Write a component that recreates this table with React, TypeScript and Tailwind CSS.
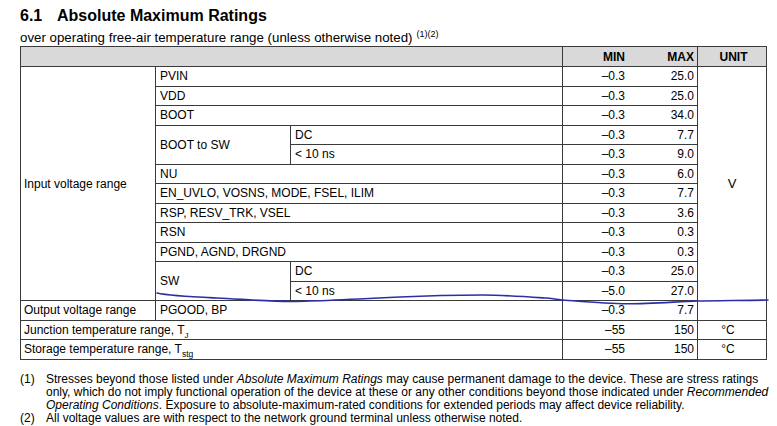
import React from "react";

const B = "border-r border-b border-[#3a3a3a]";

function Cell({ cls, children, center }: { cls: string; children?: React.ReactNode; center?: boolean }) {
  return (
    <div className={`${B} ${cls} flex items-center ${center ? "justify-center" : "pl-1"} whitespace-nowrap`}>
      {children}
    </div>
  );
}

function MM({ row, min, max }: { row: string; min: string; max: string }) {
  return (
    <div className={`${B} col-start-4 ${row} flex items-center`}>
      <span className="w-[62px] text-right">{min}</span>
      <span className="flex-1 text-right pr-[3px]">{max}</span>
    </div>
  );
}

export default function App() {
  return (
    <div
      className="relative w-[777px] h-[426px] bg-white text-black overflow-hidden pl-[20px]"
      style={{ fontFamily: '"Liberation Sans", Arial, sans-serif' }}
    >
      <div className="pt-[6px] h-[25px] leading-[19px] text-[16px] font-bold flex">
        <span className="w-[37px]">6.1</span>
        <span>Absolute Maximum Ratings</span>
      </div>
      <div className="mt-[5px] h-[16px] leading-[15px] text-[13.3px]">
        over operating free-air temperature range (unless otherwise noted)
        <span className="relative top-[-5px] ml-[4px] text-[9px]">(1)(2)</span>
      </div>

      <div className="grid grid-cols-[135px_135px_272px_135px_69px] grid-rows-[20px_repeat(15,19.5px)] border-l border-t border-[#3a3a3a] w-max text-[12px] leading-[14px]">
        {/* header */}
        <div className={`${B} col-start-1 col-span-3 row-start-1 bg-[#d9d9d9]`} />
        <div className={`${B} col-start-4 row-start-1 bg-[#d9d9d9] flex items-center font-bold`}>
          <span className="w-[62px] text-right">MIN</span>
          <span className="flex-1 text-right pr-[3px]">MAX</span>
        </div>
        <div className={`${B} col-start-5 row-start-1 bg-[#d9d9d9] flex items-center justify-center font-bold pl-[3px]`}>UNIT</div>

        {/* input voltage */}
        <Cell cls="col-start-1 row-start-2 row-span-12 pl-[3px]">Input voltage range</Cell>
        <Cell cls="col-start-2 col-span-2 row-start-2">PVIN</Cell>
        <Cell cls="col-start-2 col-span-2 row-start-3">VDD</Cell>
        <Cell cls="col-start-2 col-span-2 row-start-4">BOOT</Cell>
        <Cell cls="col-start-2 row-start-5 row-span-2">BOOT to SW</Cell>
        <Cell cls="col-start-3 row-start-5">DC</Cell>
        <Cell cls="col-start-3 row-start-6">&lt; 10 ns</Cell>
        <Cell cls="col-start-2 col-span-2 row-start-7">NU</Cell>
        <Cell cls="col-start-2 col-span-2 row-start-8">EN_UVLO, VOSNS, MODE, FSEL, ILIM</Cell>
        <Cell cls="col-start-2 col-span-2 row-start-9">RSP, RESV_TRK, VSEL</Cell>
        <Cell cls="col-start-2 col-span-2 row-start-10">RSN</Cell>
        <Cell cls="col-start-2 col-span-2 row-start-11">PGND, AGND, DRGND</Cell>
        <Cell cls="col-start-2 row-start-12 row-span-2">SW</Cell>
        <Cell cls="col-start-3 row-start-12">DC</Cell>
        <Cell cls="col-start-3 row-start-13">&lt; 10 ns</Cell>

        <MM row="row-start-2" min="–0.3" max="25.0" />
        <MM row="row-start-3" min="–0.3" max="25.0" />
        <MM row="row-start-4" min="–0.3" max="34.0" />
        <MM row="row-start-5" min="–0.3" max="7.7" />
        <MM row="row-start-6" min="–0.3" max="9.0" />
        <MM row="row-start-7" min="–0.3" max="6.0" />
        <MM row="row-start-8" min="–0.3" max="7.7" />
        <MM row="row-start-9" min="–0.3" max="3.6" />
        <MM row="row-start-10" min="–0.3" max="0.3" />
        <MM row="row-start-11" min="–0.3" max="0.3" />
        <MM row="row-start-12" min="–0.3" max="25.0" />
        <MM row="row-start-13" min="–5.0" max="27.0" />
        <div className="border-r border-[#3a3a3a] col-start-5 row-start-2 row-span-12 flex items-center justify-center text-[13px]">V</div>

        {/* output */}
        <Cell cls="col-start-1 row-start-14 pl-[3px]">Output voltage range</Cell>
        <Cell cls="col-start-2 col-span-2 row-start-14">PGOOD, BP</Cell>
        <MM row="row-start-14" min="–0.3" max="7.7" />
        <div className={`${B} col-start-5 row-start-14`} />

        <Cell cls="col-start-1 col-span-3 row-start-15 pl-[3px]">
          <span>
            Junction temperature range, T<sub className="text-[8px] align-[-2px]">J</sub>
          </span>
        </Cell>
        <MM row="row-start-15" min="–55" max="150" />
        <Cell cls="col-start-5 row-start-15" center>
          <span className="pr-[8px]">°C</span>
        </Cell>

        <Cell cls="col-start-1 col-span-3 row-start-16 pl-[3px]">
          <span>
            Storage temperature range, T<sub className="text-[8.5px] align-[-2px]">stg</sub>
          </span>
        </Cell>
        <MM row="row-start-16" min="–55" max="150" />
        <Cell cls="col-start-5 row-start-16" center>
          <span className="pr-[8px]">°C</span>
        </Cell>
      </div>

      <div className="mt-[13px] text-[12px] leading-[13.3px]">
        <div className="flex">
          <span className="w-[26px] shrink-0">(1)</span>
          <div>
            <div className="whitespace-nowrap">
              Stresses beyond those listed under <i>Absolute Maximum Ratings</i> may cause permanent damage to the device. These are stress ratings
            </div>
            <div className="whitespace-nowrap">
              only, which do not imply functional operation of the device at these or any other conditions beyond those indicated under <i>Recommended</i>
            </div>
            <div className="whitespace-nowrap">
              <i>Operating Conditions</i>. Exposure to absolute-maximum-rated conditions for extended periods may affect device reliability.
            </div>
          </div>
        </div>
        <div className="flex">
          <span className="w-[26px] shrink-0">(2)</span>
          <div className="whitespace-nowrap">All voltage values are with respect to the network ground terminal unless otherwise noted.</div>
        </div>
      </div>

      <svg className="absolute inset-0 pointer-events-none" width="777" height="426" viewBox="0 0 777 426">
        <path
          d="M157,293 C170,296 195,297 217,298 S270,301.5 290,301.5 S360,299 400,297 S465,295 483,295 S530,297 545,298 S558,300 562,300 S605,304 628,303.8 S680,301.5 697,301 S750,300.5 768,300"
          fill="none"
          stroke="#2b2fa6"
          strokeWidth="1.6"
          strokeLinecap="round"
        />
      </svg>
    </div>
  );
}
